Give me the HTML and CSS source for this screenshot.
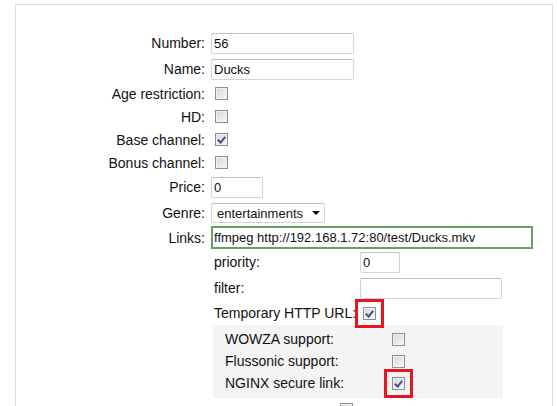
FILE: index.html
```html
<!DOCTYPE html>
<html lang="en">
<head>
    <meta charset="UTF-8">
    <meta name="viewport" content="width=device-width, initial-scale=1.0">
    <title>Channel</title>
    <link rel="stylesheet" href="styles.css">
</head>
<body>
    <div class="panel">
        <div class="row">
            <label class="lbl" for="number">Number:</label>
            <input class="txt w-wide" id="number" type="text" value="56">
        </div>
        <div class="row">
            <label class="lbl" for="name">Name:</label>
            <input class="txt w-wide" id="name" type="text" value="Ducks">
        </div>
        <div class="row check">
            <label class="lbl" for="age">Age restriction:</label>
            <input class="box" id="age" type="checkbox">
        </div>
        <div class="row check">
            <label class="lbl" for="hd">HD:</label>
            <input class="box" id="hd" type="checkbox">
        </div>
        <div class="row check">
            <label class="lbl" for="base">Base channel:</label>
            <input class="box" id="base" type="checkbox" checked>
        </div>
        <div class="row check">
            <label class="lbl" for="bonus">Bonus channel:</label>
            <input class="box" id="bonus" type="checkbox">
        </div>
        <div class="row">
            <label class="lbl" for="price">Price:</label>
            <input class="txt w-price" id="price" type="text" value="0">
        </div>
        <div class="row">
            <label class="lbl" for="genre">Genre:</label>
            <span class="select">
                <select class="txt w-genre" id="genre">
                    <option>entertainments</option>
                </select>
            </span>
        </div>
        <div class="row links">
            <label class="lbl" for="links">Links:</label>
            <input class="txt w-links" id="links" type="text" value="ffmpeg http://192.168.1.72:80/test/Ducks.mkv">
        </div>

        <div class="sub">
            <div class="row">
                <label class="lbl-s" for="priority">priority:</label>
                <input class="txt w-prio" id="priority" type="text" value="0">
            </div>
            <div class="row">
                <label class="lbl-s" for="filter">filter:</label>
                <input class="txt w-filter" id="filter" type="text">
            </div>
            <div class="row temp">
                <label class="lbl-s" for="temp">Temporary HTTP URL:</label>
                <input class="box box-sub flag" id="temp" type="checkbox" checked>
            </div>

            <!-- temporary url providers -->
            <div class="group">
                <div class="row g-row">
                    <label class="lbl-g" for="wowza">WOWZA support:</label>
                    <input class="box box-sub" id="wowza" type="checkbox">
                </div>
                <div class="row g-row">
                    <label class="lbl-g" for="fluss">Flussonic support:</label>
                    <input class="box box-sub" id="fluss" type="checkbox">
                </div>
                <div class="row g-row">
                    <label class="lbl-g" for="nginx">NGINX secure link:</label>
                    <input class="box box-sub flag" id="nginx" type="checkbox" checked>
                </div>
            </div>

            <div class="row check">
                <input class="box box-last" id="extra" type="checkbox">
            </div>
        </div>
    </div>
</body>
</html>
```

FILE: styles.css
```css
body {
    margin: 0;
    font-family: "Liberation Sans", Arial, sans-serif;
    font-size: 14px;
    color: #111;
    background: #fff;
    overflow: hidden;
}
.panel {
    margin: 4px 4px 0 15px;
    border: 1px solid #dedede;
    border-bottom: none;
    padding-top: 25px;
    min-height: 420px;
}
.row {
    display: flex;
    align-items: center;
    height: 26px;
}
.row.check,
.row.links {
    height: 23px;
}
.row.temp {
    height: 24px;
}
.lbl {
    width: 189px;
    margin-right: 6px;
    text-align: right;
    white-space: nowrap;
}

/* text fields */
.txt {
    box-sizing: border-box;
    height: 21px;
    margin: 0;
    padding: 0 2px;
    font: 13px "Liberation Sans", Arial, sans-serif;
    color: #111;
    background: #fff;
    border: 1px solid #cfd5dc;
    border-top-color: #b9c0c8;
    border-radius: 2px;
}
.w-wide { width: 143px; }
.w-price { width: 52px; }
.w-prio { width: 40px; }
.w-filter { width: 142px; }
.w-links {
    width: 322px;
    height: 23px;
    padding: 0 1px;
    border: 2px solid #64a15d;
    border-radius: 0;
}

.select {
    position: relative;
    display: inline-block;
}
.w-genre {
    width: 114px;
    height: 20px;
    padding: 0 0 0 5px;
    appearance: none;
    -webkit-appearance: none;
}
.select::after {
    content: "";
    position: absolute;
    right: 5px;
    top: 8px;
    border-left: 4px solid transparent;
    border-right: 4px solid transparent;
    border-top: 4px solid #000;
    pointer-events: none;
}

/* classic checkbox */
.box {
    appearance: none;
    -webkit-appearance: none;
    position: relative;
    box-sizing: border-box;
    width: 13px;
    height: 13px;
    margin: 0 0 0 4px;
    border: 1px solid #8f8f8f;
    background: linear-gradient(135deg, #d6d6d6, #f7f7f7);
    box-shadow: inset 0 0 0 1px #f2f2f2;
}
.box:checked::after {
    content: "";
    position: absolute;
    left: 3px;
    top: 1px;
    width: 3px;
    height: 6px;
    border-right: 2px solid #3f5490;
    border-bottom: 2px solid #3f5490;
    transform: rotate(40deg);
}
.box-sub {
    margin-left: 3px;
}
.box-last {
    margin-left: 126px;
}
.flag {
    outline: 3px solid #e8141e;
    outline-offset: 5px;
}

/* nested link options */
.sub {
    padding-left: 198px;
}
.lbl-s {
    width: 146px;
    white-space: nowrap;
}
.group {
    box-sizing: border-box;
    width: 290px;
    margin-left: -1px;
    padding: 3px 0 4px 12px;
    background: #f4f4f4;
}
.g-row {
    height: 22px;
}
.lbl-g {
    width: 164px;
    white-space: nowrap;
}
```
